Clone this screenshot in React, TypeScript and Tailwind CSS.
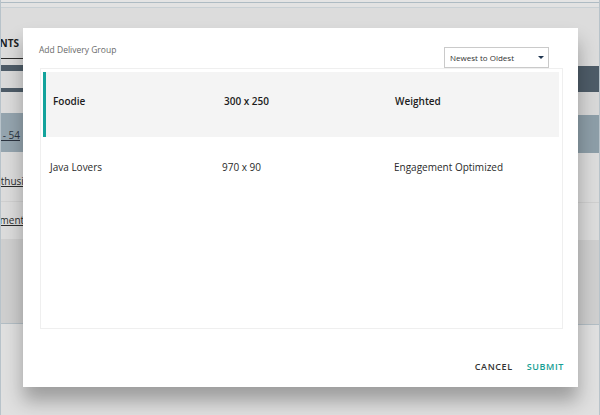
import React from "react";

const font = { fontFamily: '"Open Sans", "Liberation Sans", sans-serif' };

function LeftStrip() {
  return (
    <div className="flex w-[22px] shrink-0 flex-col">
      <div className="h-[2px] bg-[#e4e4e4]" />
      <div className="h-[1px] bg-[#aebbc3]" />
      <div className="h-[5px] bg-[#e2e2e2] border-b border-[#c9d0d4]" />
      <div className="relative h-[50px] overflow-hidden bg-[#dcdcdc]">
        <div className="flex h-full items-center justify-end pr-[4px] pt-[20px] whitespace-nowrap text-[10px] font-bold text-[#1e1e1e]">
          PLACEMENTS
        </div>
      </div>
      <div className="h-[1px] bg-[#2b2b2b]" />
      <div className="h-[6px] bg-[#dcdcdc]" />
      <div className="h-[6px] bg-[#4e5c68]" />
      <div className="h-[17px] bg-[#dadada]" />
      <div className="h-[4px] bg-[#4e5c68]" />
      <div className="h-[21px] bg-[#dcdcdc]" />
      <div className="flex h-[39px] items-end justify-end overflow-hidden bg-[#95a5af] pb-[9px] pr-[3px] whitespace-nowrap text-[10px] text-[#2c3440] underline">
        1 - 54
      </div>
      <div className="flex h-[50px] items-end justify-start overflow-hidden border-b border-[#d0d0d0] bg-[#dcdcdc] pb-[12px] whitespace-nowrap text-[10px] text-[#2c2c2c] underline">
        <span className="ml-[-12px]">Enthusiasts</span>
      </div>
      <div className="flex h-[37px] items-center justify-start overflow-hidden bg-[#dcdcdc] whitespace-nowrap text-[10px] text-[#2c2c2c] underline">
        <span className="ml-[-18px]">Segments</span>
      </div>
      <div className="h-[85px] bg-[#cfcfcf] border-b border-[#b3bec5]" />
      <div className="flex-1 bg-[#e0e0e0]" />
    </div>
  );
}

function RightStrip() {
  return (
    <div className="flex flex-1 flex-col">
      <div className="h-[2px] bg-[#e4e4e4]" />
      <div className="h-[1px] bg-[#aebbc3]" />
      <div className="h-[5px] bg-[#e2e2e2] border-b border-[#c9d0d4]" />
      <div className="h-[58px] bg-[#dcdcdc]" />
      <div className="h-[26px] bg-[#4e5c68]" />
      <div className="h-[23px] bg-[#d8d8d8]" />
      <div className="h-[38px] bg-[#8d9ea8]" />
      <div className="h-[50px] border-b border-[#cfcfcf] bg-[#dcdcdc]" />
      <div className="h-[37px] bg-[#dcdcdc]" />
      <div className="h-[85px] bg-[#cfcfcf] border-b border-[#b3bec5]" />
      <div className="flex-1 bg-[#e0e0e0]" />
    </div>
  );
}

function Row({
  selected,
  cells,
}: {
  selected?: boolean;
  cells: string[];
}) {
  return (
    <div
      className={
        selected
          ? "grid h-[65px] grid-cols-[171px_171px_1fr] items-center border-l-[3px] border-[#13a39c] bg-[#f4f4f4] pb-[7px] pl-[7px] text-[10px] font-semibold text-[#1c1c1c]"
          : "grid h-[65px] grid-cols-[172px_172px_1fr] items-center pb-[5px] pl-[7px] text-[10px] text-[#2a2a2a]"
      }
    >
      {cells.map((c) => (
        <div key={c} className="whitespace-nowrap">
          {c}
        </div>
      ))}
    </div>
  );
}

function Modal() {
  return (
    <div className="absolute left-[22px] top-[28px] flex h-[359px] w-[555px] flex-col bg-white shadow-[0_14px_18px_rgba(0,0,0,0.3)]">
      <div className="flex h-[40px] items-start justify-between pl-[16px] pr-[29px] pt-[19px]">
        <div className="mt-[-3px] text-[8.5px] leading-[12px] text-[#6a6a6a]">
          Add Delivery Group
        </div>
        <div className="flex h-[21px] w-[105px] items-center justify-between border border-[#cacaca] bg-white pl-[5px] pr-[4px]">
          <span className="text-[8px] text-[#333]">Newest to Oldest</span>
          <svg width="6" height="3" viewBox="0 0 6 3">
            <path d="M0 0 L6 0 L3 3 Z" fill="#1f3550" />
          </svg>
        </div>
      </div>
      <div className="ml-[17px] mr-[15px] h-[261px] border border-[#efefef] pl-[2px] pr-[3px] pt-[3px]">
        <Row selected cells={["Foodie", "300 x 250", "Weighted"]} />
        <Row cells={["Java Lovers", "970 x 90", "Engagement Optimized"]} />
      </div>
      <div className="flex justify-end gap-[14px] pr-[14px] pt-[32px] text-[9px] font-semibold leading-[12px] tracking-[0.6px]">
        <span className="text-[#333]">CANCEL</span>
        <span className="text-[#16a094]">SUBMIT</span>
      </div>
    </div>
  );
}

export default function App() {
  return (
    <div
      className="relative flex h-[415px] w-[600px] overflow-hidden border-x border-[#b8c3ca] bg-[#dedede]"
      style={font}
    >
      <LeftStrip />
      <RightStrip />
      <Modal />
    </div>
  );
}
